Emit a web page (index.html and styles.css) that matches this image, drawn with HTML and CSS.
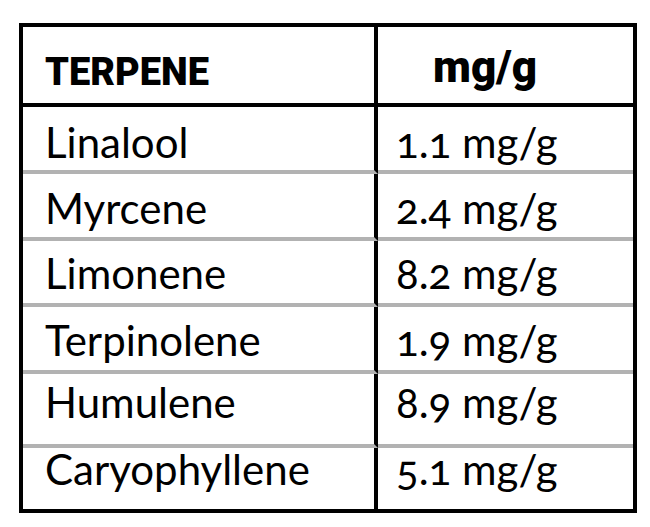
FILE: index.html
```html
<!DOCTYPE html>
<html lang="en">
<head>
    <meta charset="UTF-8">
    <meta name="viewport" content="width=device-width, initial-scale=1.0">
    <title>Terpene Profile</title>
    <link rel="stylesheet" href="styles.css">
</head>
<body>

    <table class="terpene-table">
        <thead>
            <tr>
                <th class="name-col">TERPENE</th>
                <th class="amount-col">mg/g</th>
            </tr>
        </thead>
        <tbody>
            <tr><td class="name-col">Linalool</td><td class="amount-col">1.1 mg/g</td></tr>
            <tr><td class="name-col">Myrcene</td><td class="amount-col">2.4 mg/g</td></tr>
            <tr><td class="name-col">Limonene</td><td class="amount-col">8.2 mg/g</td></tr>
            <tr><td class="name-col">Terpinolene</td><td class="amount-col">1.9 mg/g</td></tr>
            <tr><td class="name-col">Humulene</td><td class="amount-col">8.9 mg/g</td></tr>
            <tr><td class="name-col">Caryophyllene</td><td class="amount-col">5.1 mg/g</td></tr>
        </tbody>
    </table>

</body>
</html>
```

FILE: styles.css
```css
/* --- Page --- */
body {
    margin: 0;
    padding: 23px 0 0 19px;
    background-color: #ffffff;
    color: #000000;
    font-family: Lato, "Open Sans", sans-serif;
}

/* --- Table frame --- */
.terpene-table {
    border: 4px solid #000;
    border-collapse: separate;
    border-spacing: 0;
    width: 618px;
}

th, td {
    padding: 0;
    text-align: left;
    vertical-align: top;
    box-sizing: border-box;
    line-height: 50px;
}

.name-col {
    width: 355px;
    border-right: 4px solid #000;
    padding-left: 22px;
}

.amount-col { padding-left: 18px; }

/* --- Header --- */
th {
    height: 80px;
    border-bottom: 4px solid #000;
    font-family: Roboto, "Liberation Sans", sans-serif;
    font-weight: 900;
    font-size: 38px;
    padding-top: 20px;
}

th.amount-col {
    padding-left: 55px;
    padding-top: 15px;
    font-size: 44px;
}

/* --- Rows --- */
td {
    height: 67px;
    border-bottom: 4px solid #b2b2b2;
    font-size: 42px;
    padding-top: 10px;
    font-variant-numeric: oldstyle-nums;
}

/* the scanned rows are not quite even */
tbody tr:nth-child(2) td { padding-top: 9px; }
tbody tr:nth-child(3) td { height: 66px; padding-top: 7px; }
tbody tr:nth-child(4) td { padding-top: 8px; }
tbody tr:nth-child(5) td { height: 74px; padding-top: 3px; }

tbody tr:last-child td {
    height: 61px;
    border-bottom: none;
    line-height: 40px;
    padding-top: 1px;
}
```
